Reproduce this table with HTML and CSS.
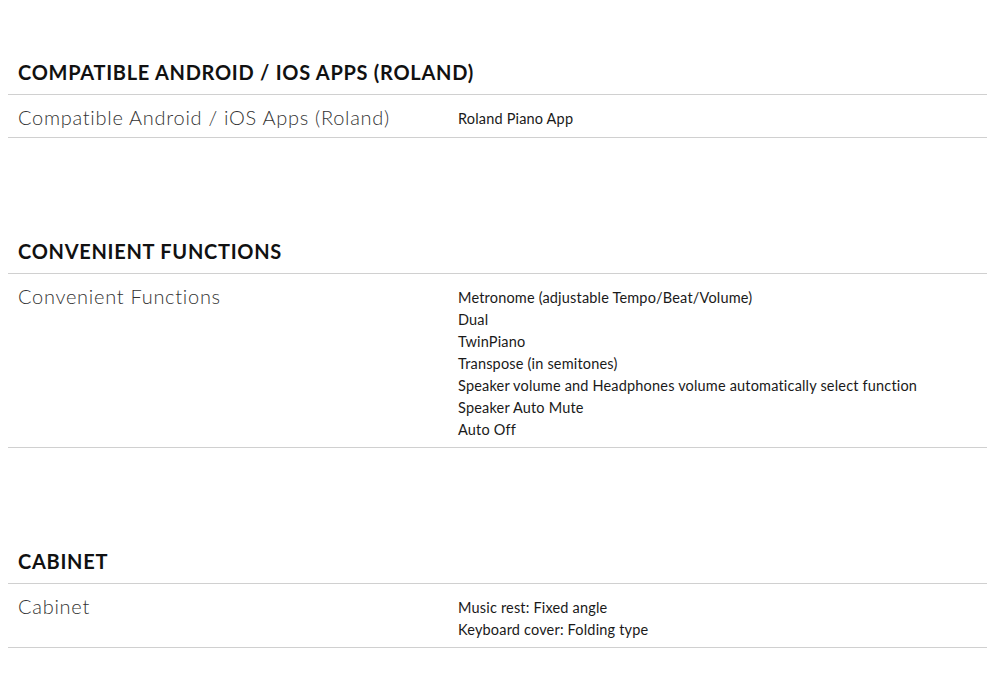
FILE: index.html
```html
<!DOCTYPE html>
<html>
<head>
<meta charset="utf-8">
<link rel="stylesheet" href="styles.css">
</head>
<body>
<div class="specs">
  <section class="group">
    <h2 class="group-title">COMPATIBLE ANDROID / IOS APPS (ROLAND)</h2>
    <div class="row">
      <div class="label">Compatible Android / iOS Apps (Roland)</div>
      <div class="value">
        <div>Roland Piano App</div>
      </div>
    </div>
  </section>
  <section class="group">
    <h2 class="group-title">CONVENIENT FUNCTIONS</h2>
    <div class="row">
      <div class="label">Convenient Functions</div>
      <div class="value">
        <div>Metronome (adjustable Tempo/Beat/Volume)</div>
        <div>Dual</div>
        <div>TwinPiano</div>
        <div>Transpose (in semitones)</div>
        <div>Speaker volume and Headphones volume automatically select function</div>
        <div>Speaker Auto Mute</div>
        <div>Auto Off</div>
      </div>
    </div>
  </section>
  <section class="group">
    <h2 class="group-title">CABINET</h2>
    <div class="row">
      <div class="label">Cabinet</div>
      <div class="value">
        <div>Music rest: Fixed angle</div>
        <div>Keyboard cover: Folding type</div>
      </div>
    </div>
  </section>
</div>
</body>
</html>
```
FILE: styles.css
```css
body {
  margin: 8px;
  background: #fff;
  font-family: Lato, "Open Sans", sans-serif;
  color: #1a1a1a;
}
.specs {
  display: flex;
  flex-direction: column;
  gap: 101px;
  padding-top: 52px;
}
.group-title {
  margin: 0;
  padding: 0 10px 10px;
  font-size: 20px;
  line-height: 24px;
  font-weight: 700;
  letter-spacing: 0.72px;
  color: #111;
  border-bottom: 1px solid #d0d0d0;
}
.row {
  display: grid;
  grid-template-columns: 440px 1fr;
  padding: 10px 10px 6px;
  border-bottom: 1px solid #d0d0d0;
}
.label {
  padding-bottom: 2px;
  font-size: 20px;
  line-height: 24px;
  font-weight: 300;
  letter-spacing: 0.72px;
  color: #333;
}
.value {
  padding-top: 3px;
  font-size: 14.5px;
  line-height: 22px;
  letter-spacing: 0.18px;
  color: #1a1a1a;
}
```
